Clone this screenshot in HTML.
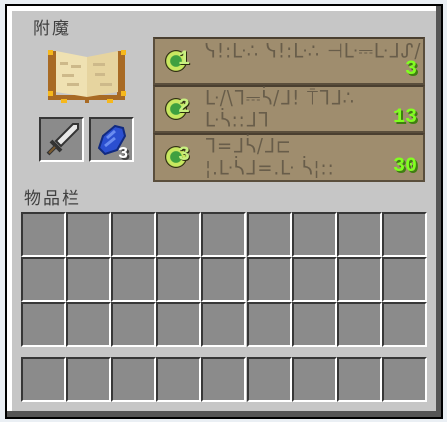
<!DOCTYPE html>
<html><head><meta charset="utf-8"><style>
*{margin:0;padding:0;box-sizing:border-box}
body{width:447px;height:422px;background:#eaeff4;position:relative;overflow:hidden;font-family:"Liberation Sans","Noto Sans CJK SC",sans-serif}
.abs{position:absolute}
#panel{left:5px;top:4px;width:438px;height:415px;background:#000;}
#p2{left:7px;top:6px;width:434px;height:411px;background:#555;}
#p3{left:7px;top:6px;width:429px;height:405px;background:#fff;}
#p4{left:12px;top:11px;width:424px;height:400px;background:#c6c6c6;}
.slot{position:absolute;width:45px;height:45px;background:#8b8b8b;border-top:2px solid #373737;border-left:2px solid #373737;border-bottom:2px solid #fff;border-right:2px solid #fff}
.lbl{position:absolute;color:#404040;font-size:17px;letter-spacing:2px}
.btn{position:absolute;left:153px;width:272px;background:#9f8d6e;border:2px solid #5a4e3c;border-top-color:#4a3f30}
.gal{position:absolute;left:50px;color:#685d4a;font-family:"DejaVu Sans",sans-serif;font-size:18px;letter-spacing:1px;line-height:20px;transform:scaleY(1.1);transform-origin:top left}
.num{position:absolute;right:6px;bottom:2px;color:#80ff20;font-family:"Liberation Mono",monospace;font-weight:bold;font-size:20px;text-shadow:2px 2px 0 #3f7f10}
.orb{position:absolute;left:10px;width:22px;height:22px;border-radius:50%;background:radial-gradient(circle,#3fa040 35%,#c8e860 40%,#c8e860 60%,#2c2c10 66%);}
.on{position:absolute;left:23px;font-family:"Liberation Mono",monospace;font-weight:bold;font-size:20px;color:#c8f080;text-shadow:1px 1px 0 #2c2c10}
</style></head><body>
<div class="abs" id="panel"></div><div class="abs" id="p2"></div><div class="abs" id="p3"></div><div class="abs" id="p4"></div>
<div class="lbl" style="left:33px;top:14px">附魔</div>
<div class="lbl" style="left:24px;top:184px">物品栏</div>
<svg class="abs" style="left:45px;top:47px" width="84" height="57" viewBox="0 0 84 57">
<path d="M3 4h8v44h30l31-0V4h8v49H44v3H40v-3H3z" fill="#a86a24"/>
<rect x="3" y="3" width="5" height="5" fill="#f6b81c"/><rect x="76" y="3" width="5" height="5" fill="#f6b81c"/>
<rect x="3" y="44" width="5" height="5" fill="#f6b81c"/><rect x="76" y="44" width="5" height="5" fill="#f6b81c"/>
<rect x="16" y="52" width="6" height="4" fill="#f6b81c"/><rect x="62" y="52" width="6" height="4" fill="#f6b81c"/>
<path d="M11 4l31 6v40L11 45z" fill="#efe1b2"/><path d="M42 10l31-6v41L42 50z" fill="#e6d49f"/>
<path d="M15 15h8v3h-8zM26 18h10v3H26zM17 27h12v3H17zM22 36h12v3H22zM48 16h12v3H48zM50 26h10v3H50zM55 36h12v3H55z" fill="#cdb98a"/>
</svg>
<div class="slot" style="left:39px;top:117px"></div>
<div class="slot" style="left:89px;top:117px"></div>
<svg class="abs" style="left:43px;top:121px" width="38" height="38" viewBox="0 0 38 38">
<path d="M30 3l5 0 0 5-17 17-5-5z" fill="#e8e8e8" stroke="#333" stroke-width="2"/>
<path d="M8 20l10 10M5 33l7-7" stroke="#333" stroke-width="4"/><path d="M6 32l6-6" stroke="#7a5a30" stroke-width="2"/>
</svg>
<svg class="abs" style="left:93px;top:122px" width="36" height="36" viewBox="0 0 36 36">
<path d="M6 26l4-12 12-10 8 2 2 8-8 14-12 4z" fill="#2b4fd0" stroke="#112a80" stroke-width="2"/>
<path d="M14 16l8-7M12 24l10-8" stroke="#6a8cf0" stroke-width="3"/>
</svg>
<div class="abs" style="left:118px;top:145px;color:#fff;font-family:'Liberation Mono',monospace;font-size:17px;font-weight:bold;text-shadow:2px 2px 0 #3f3f3f">3</div>
<div class="btn" style="top:37px;height:48px"><div class="orb" style="top:11px"></div><div class="on" style="top:9px">1</div><div class="gal" style="top:2px">ᓭ!:ᒷ∴ ᓭ!:ᒷ∴ ⊣ᒷ⎓ᒷᒧᔑ/</div><div class="num">3</div></div>
<div class="btn" style="top:85px;height:48px"><div class="orb" style="top:11px"></div><div class="on" style="top:9px">2</div><div class="gal" style="top:1px">ᒷ/\ᒣ⎓ᓵ/ᒧ! ⍑ᒣᒧ∴<br>ᒷᓵ::ᒧᒣ</div><div class="num">13</div></div>
<div class="btn" style="top:133px;height:49px"><div class="orb" style="top:11px"></div><div class="on" style="top:9px">3</div><div class="gal" style="top:1px">ᒣ=ᒧᓵ/ᒧ⊏<br>¦.ᒷᓵᒧ=.ᒷ ᓵ¦::</div><div class="num">30</div></div>
<div id="slots"></div>
<script>
var h='';
[212,257,302,357].forEach(function(y){for(var i=0;i<9;i++)h+='<div class="slot" style="left:'+(21+i*45.1)+'px;top:'+y+'px"></div>';});
document.getElementById('slots').innerHTML=h;
</script>
</body></html>
